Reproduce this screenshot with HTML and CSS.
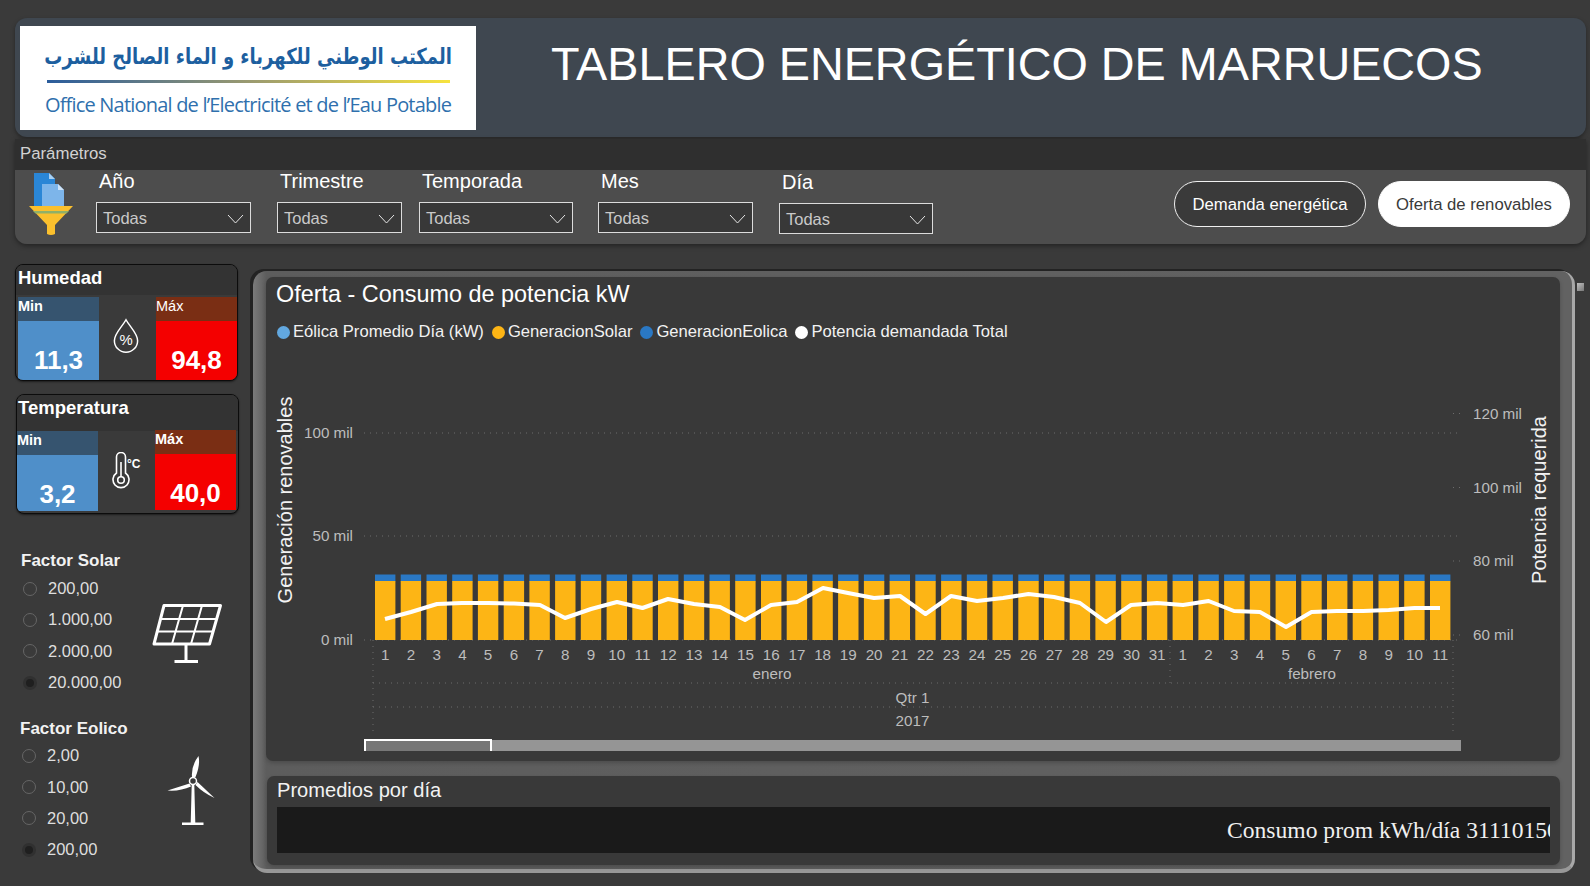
FILE: index.html
```html
<!DOCTYPE html>
<html lang="es">
<head>
<meta charset="utf-8">
<title>Tablero energético de Marruecos</title>
<link rel="stylesheet" href="styles.css">
</head>
<body>
<div class="page">
  <header class="header">
    <div class="logo">
      <div class="logo-ar" dir="rtl" lang="ar">المكتب الوطني للكهرباء و الماء الصالح للشرب</div>
      <div class="logo-rule"></div>
      <div class="logo-fr">Office National de l’Electricité et de l’Eau Potable</div>
    </div>
    <h1 class="title">TABLERO ENERGÉTICO DE MARRUECOS</h1>
  </header>

  <section class="params">
    <div class="params-head">Parámetros</div>
    <div class="params-body">
      <svg class="filter-icon" width="46" height="64" viewBox="28 172 46 64">
        <path d="M34 173h15l6 6v27H34z" fill="#2a86d6"/>
        <path d="M49 173l6 6h-6z" fill="#a9d0f2"/>
        <path d="M42 184h16l6 6v17H42z" fill="#7db5ea"/>
        <path d="M58 184l6 6h-6z" fill="#cfe3f7"/>
        <path d="M29 206h44l-18 19v9q-4 2-8 0v-9z" fill="#fbc02d"/>
        <path d="M33 211h36l-2.500 2.500H35.500z" fill="#8fb069"/>
      </svg>
      <div class="slicer w155 first">
        <label class="slicer-label">Año</label>
        <div class="select"><span>Todas</span><svg class="chev" width="17" height="10" viewBox="0 0 17 10"><path d="M1 1l7.500 8L16 1"/></svg></div>
      </div>
      <div class="slicer w125 gap26">
        <label class="slicer-label">Trimestre</label>
        <div class="select"><span>Todas</span><svg class="chev" width="17" height="10" viewBox="0 0 17 10"><path d="M1 1l7.500 8L16 1"/></svg></div>
      </div>
      <div class="slicer w154 gap17">
        <label class="slicer-label">Temporada</label>
        <div class="select"><span>Todas</span><svg class="chev" width="17" height="10" viewBox="0 0 17 10"><path d="M1 1l7.500 8L16 1"/></svg></div>
      </div>
      <div class="slicer w155 gap25">
        <label class="slicer-label">Mes</label>
        <div class="select"><span>Todas</span><svg class="chev" width="17" height="10" viewBox="0 0 17 10"><path d="M1 1l7.500 8L16 1"/></svg></div>
      </div>
      <div class="slicer w154 gap26 lower">
        <label class="slicer-label">Día</label>
        <div class="select"><span>Todas</span><svg class="chev" width="17" height="10" viewBox="0 0 17 10"><path d="M1 1l7.500 8L16 1"/></svg></div>
      </div>
      <div class="buttons">
        <button class="pill">Demanda energética</button>
        <button class="pill pill-on">Oferta de renovables</button>
      </div>
    </div>
  </section>

  <div class="content">
    <aside class="side">
      <div class="kpi">
        <div class="kpi-title">Humedad</div>
        <div class="kpi-row">
          <div class="stat stat-min"><div class="stat-head bold">Min</div><div class="stat-val">11,3</div></div>
          <svg class="kpi-icon" width="26" height="36" viewBox="0 0 28 38">
            <path class="ico" d="M14 1.500C10 9 1.500 16 1.500 24a12.500 12.500 0 0 0 25 0C26.500 16 18 9 14 1.500z"/>
            <text class="pct" x="14" y="29" text-anchor="middle">%</text>
          </svg>
          <div class="stat stat-max"><div class="stat-head">Máx</div><div class="stat-val">94,8</div></div>
        </div>
      </div>

      <div class="kpi kpi-temp">
        <div class="kpi-title">Temperatura</div>
        <div class="kpi-row">
          <div class="stat stat-min"><div class="stat-head bold">Min</div><div class="stat-val">3,2</div></div>
          <div class="thermo">
            <svg width="18" height="37" viewBox="0 0 18 37">
              <path class="ico" d="M4.500 21V5a4.500 4.500 0 0 1 9 0v16a8 8 0 1 1-9 0z"/>
              <circle class="ico" cx="9" cy="28" r="3.300"/><path class="ico" d="M9 10v15"/>
            </svg>
            <span class="deg">°C</span>
          </div>
          <div class="stat stat-max"><div class="stat-head bold">Máx</div><div class="stat-val">40,0</div></div>
        </div>
      </div>

      <div class="factor factor-solar">
        <div class="factor-list">
          <div class="factor-title">Factor Solar</div>
          <div class="radio"><i></i>200,00</div>
          <div class="radio"><i></i>1.000,00</div>
          <div class="radio"><i></i>2.000,00</div>
          <div class="radio on"><i></i>20.000,00</div>
        </div>
        <svg class="solar" width="72" height="62" viewBox="152 602 72 62">
          <path class="ico-w" d="M165 604.500h56.500L210.500 643H155z"/>
          <path class="ico-w2" d="M161 618h56M157.500 630.500h56M184 604.500L173 643M203 604.500L192 643"/>
          <path class="ico-w" d="M187 643v17M175.500 660.500h23.500"/>
        </svg>
      </div>

      <div class="factor factor-wind">
        <div class="factor-list">
          <div class="factor-title">Factor Eolico</div>
          <div class="radio"><i></i>2,00</div>
          <div class="radio"><i></i>10,00</div>
          <div class="radio"><i></i>20,00</div>
          <div class="radio on"><i></i>200,00</div>
        </div>
        <svg class="wind" width="52" height="72" viewBox="166 755 52 72">
          <path class="fill-w" d="M199.500 757q2 9-3 21l-3.500 0q-1-11 6.500-21zM168.500 791.500l22-7 1.500 3q-11 5-23.500 4zM215.500 799l-17-16-2 3q8 8 19 13z"/>
          <path class="fill-w" d="M192.700 786h2.600l1 38h-4.600zM183 823.500h21.500v2.500H183z"/>
          <circle class="hub" cx="194" cy="782" r="3.500"/>
        </svg>
      </div>
    </aside>

    <main class="main">
      <span class="corner"></span>
      <section class="chart-card">
        <h2 class="chart-title">Oferta - Consumo de potencia kW</h2>
        <div class="legend">
          <span class="lg"><i class="dot d1"></i>Eólica Promedio Día (kW)</span>
          <span class="lg"><i class="dot d2"></i>GeneracionSolar</span>
          <span class="lg"><i class="dot d3"></i>GeneracionEolica</span>
          <span class="lg"><i class="dot d4"></i>Potencia demandada Total</span>
        </div>
        <svg class="plot" width="1294" height="416" viewBox="266 345 1294 416">
          <g class="grid">
            <path d="M364 433H1457M364 536H1457M364 640H1457M373 683H1453M373 707H1453M373 640V733M1453 640V733M1170 640V683M1453 413.500H1463M1453 487.500H1463M1453 561H1463M1453 635H1463"/>
          </g>
          <g class="ticks">
            <text x="353" y="438" text-anchor="end">100 mil</text>
            <text x="353" y="541" text-anchor="end">50 mil</text>
            <text x="353" y="645" text-anchor="end">0 mil</text>
            <text x="1473" y="419">120 mil</text>
            <text x="1473" y="493">100 mil</text>
            <text x="1473" y="566">80 mil</text>
            <text x="1473" y="640">60 mil</text>
          </g>
          <text class="axis" transform="translate(292 500) rotate(-90)" text-anchor="middle">Generación renovables</text>
          <text class="axis" transform="translate(1546 500) rotate(-90)" text-anchor="middle">Potencia requerida</text>
          <g class="blue">
            <rect x="375" y="574.500" width="20.400" height="7"/><rect x="400.700" y="574.500" width="20.400" height="7"/><rect x="426.500" y="574.500" width="20.400" height="7"/><rect x="452.200" y="574.500" width="20.400" height="7"/><rect x="477.900" y="574.500" width="20.400" height="7"/><rect x="503.700" y="574.500" width="20.400" height="7"/><rect x="529.400" y="574.500" width="20.400" height="7"/><rect x="555.100" y="574.500" width="20.400" height="7"/><rect x="580.800" y="574.500" width="20.400" height="7"/><rect x="606.600" y="574.500" width="20.400" height="7"/><rect x="632.300" y="574.500" width="20.400" height="7"/><rect x="658" y="574.500" width="20.400" height="7"/><rect x="683.800" y="574.500" width="20.400" height="7"/><rect x="709.500" y="574.500" width="20.400" height="7"/><rect x="735.200" y="574.500" width="20.400" height="7"/><rect x="761" y="574.500" width="20.400" height="7"/><rect x="786.700" y="574.500" width="20.400" height="7"/><rect x="812.400" y="574.500" width="20.400" height="7"/><rect x="838.100" y="574.500" width="20.400" height="7"/><rect x="863.900" y="574.500" width="20.400" height="7"/><rect x="889.600" y="574.500" width="20.400" height="7"/><rect x="915.300" y="574.500" width="20.400" height="7"/><rect x="941.100" y="574.500" width="20.400" height="7"/><rect x="966.800" y="574.500" width="20.400" height="7"/><rect x="992.500" y="574.500" width="20.400" height="7"/><rect x="1018.300" y="574.500" width="20.400" height="7"/><rect x="1044" y="574.500" width="20.400" height="7"/><rect x="1069.700" y="574.500" width="20.400" height="7"/><rect x="1095.400" y="574.500" width="20.400" height="7"/><rect x="1121.200" y="574.500" width="20.400" height="7"/><rect x="1146.900" y="574.500" width="20.400" height="7"/><rect x="1172.600" y="574.500" width="20.400" height="7"/><rect x="1198.400" y="574.500" width="20.400" height="7"/><rect x="1224.100" y="574.500" width="20.400" height="7"/><rect x="1249.800" y="574.500" width="20.400" height="7"/><rect x="1275.600" y="574.500" width="20.400" height="7"/><rect x="1301.300" y="574.500" width="20.400" height="7"/><rect x="1327" y="574.500" width="20.400" height="7"/><rect x="1352.700" y="574.500" width="20.400" height="7"/><rect x="1378.500" y="574.500" width="20.400" height="7"/><rect x="1404.200" y="574.500" width="20.400" height="7"/><rect x="1430" y="574.500" width="20.400" height="7"/>
          </g>
          <g class="yellow">
            <rect x="375" y="581" width="20.400" height="59"/><rect x="400.700" y="581" width="20.400" height="59"/><rect x="426.500" y="581" width="20.400" height="59"/><rect x="452.200" y="581" width="20.400" height="59"/><rect x="477.900" y="581" width="20.400" height="59"/><rect x="503.700" y="581" width="20.400" height="59"/><rect x="529.400" y="581" width="20.400" height="59"/><rect x="555.100" y="581" width="20.400" height="59"/><rect x="580.800" y="581" width="20.400" height="59"/><rect x="606.600" y="581" width="20.400" height="59"/><rect x="632.300" y="581" width="20.400" height="59"/><rect x="658" y="581" width="20.400" height="59"/><rect x="683.800" y="581" width="20.400" height="59"/><rect x="709.500" y="581" width="20.400" height="59"/><rect x="735.200" y="581" width="20.400" height="59"/><rect x="761" y="581" width="20.400" height="59"/><rect x="786.700" y="581" width="20.400" height="59"/><rect x="812.400" y="581" width="20.400" height="59"/><rect x="838.100" y="581" width="20.400" height="59"/><rect x="863.900" y="581" width="20.400" height="59"/><rect x="889.600" y="581" width="20.400" height="59"/><rect x="915.300" y="581" width="20.400" height="59"/><rect x="941.100" y="581" width="20.400" height="59"/><rect x="966.800" y="581" width="20.400" height="59"/><rect x="992.500" y="581" width="20.400" height="59"/><rect x="1018.300" y="581" width="20.400" height="59"/><rect x="1044" y="581" width="20.400" height="59"/><rect x="1069.700" y="581" width="20.400" height="59"/><rect x="1095.400" y="581" width="20.400" height="59"/><rect x="1121.200" y="581" width="20.400" height="59"/><rect x="1146.900" y="581" width="20.400" height="59"/><rect x="1172.600" y="581" width="20.400" height="59"/><rect x="1198.400" y="581" width="20.400" height="59"/><rect x="1224.100" y="581" width="20.400" height="59"/><rect x="1249.800" y="581" width="20.400" height="59"/><rect x="1275.600" y="581" width="20.400" height="59"/><rect x="1301.300" y="581" width="20.400" height="59"/><rect x="1327" y="581" width="20.400" height="59"/><rect x="1352.700" y="581" width="20.400" height="59"/><rect x="1378.500" y="581" width="20.400" height="59"/><rect x="1404.200" y="581" width="20.400" height="59"/><rect x="1430" y="581" width="20.400" height="59"/>
          </g>
          <polyline class="line" points="385,619 411,612 437,604 462,603 488,603 514,603.500 540,605 565,618 591,609 617,602 642.500,608 668,599 694,604 720,607 745,620 771,605 797,602 823,588 848,593 874,598 900,596 925.500,614 951,596 977,601 1003,598 1028.500,594 1054,597 1080,603 1106,622 1131,605 1157,603 1183,605 1208.600,601 1234,611 1260,612 1286,627 1311.500,612 1337,611 1363,611 1388.700,610 1414.400,608 1440,608"/>
          <g class="ticks days" text-anchor="middle">
            <text x="385.200" y="660">1</text><text x="410.900" y="660">2</text><text x="436.700" y="660">3</text><text x="462.400" y="660">4</text><text x="488.100" y="660">5</text><text x="513.900" y="660">6</text><text x="539.600" y="660">7</text><text x="565.300" y="660">8</text><text x="591" y="660">9</text><text x="616.800" y="660">10</text><text x="642.500" y="660">11</text><text x="668.200" y="660">12</text><text x="694" y="660">13</text><text x="719.700" y="660">14</text><text x="745.400" y="660">15</text><text x="771.200" y="660">16</text><text x="796.900" y="660">17</text><text x="822.600" y="660">18</text><text x="848.300" y="660">19</text><text x="874.100" y="660">20</text><text x="899.800" y="660">21</text><text x="925.500" y="660">22</text><text x="951.300" y="660">23</text><text x="977" y="660">24</text><text x="1002.700" y="660">25</text><text x="1028.500" y="660">26</text><text x="1054.200" y="660">27</text><text x="1079.900" y="660">28</text><text x="1105.600" y="660">29</text><text x="1131.400" y="660">30</text><text x="1157.100" y="660">31</text><text x="1182.800" y="660">1</text><text x="1208.600" y="660">2</text><text x="1234.300" y="660">3</text><text x="1260" y="660">4</text><text x="1285.800" y="660">5</text><text x="1311.500" y="660">6</text><text x="1337.200" y="660">7</text><text x="1362.900" y="660">8</text><text x="1388.700" y="660">9</text><text x="1414.400" y="660">10</text><text x="1440.200" y="660">11</text>
            <text x="772" y="679">enero</text>
            <text x="1312" y="679">febrero</text>
            <text x="912.500" y="703">Qtr 1</text>
            <text x="912.500" y="726">2017</text>
          </g>
          <rect class="track" x="364" y="740" width="1097" height="11"/>
          <path class="thumb" d="M365 751V740H491V751"/>
        </svg>
      </section>
      <section class="avg-card">
        <h2 class="avg-title">Promedios por día</h2>
        <div class="ticker"><span>Consumo prom kWh/día 31110150</span></div>
      </section>
    </main>
  </div>
</div>
</body>
</html>
```

FILE: styles.css
```css
* { box-sizing: border-box; }
html, body { margin: 0; height: 100%; }
body {
  background: #3a3a3a;
  font-family: "Liberation Sans", Arial, sans-serif;
  color: #fff;
  overflow: hidden;
}
.page { height: 886px; padding: 18px 4px 0 15px; }

/* header */
.header {
  height: 119px;
  background: #3f4750;
  border-radius: 12px;
  padding: 8px 0 0 5px;
  display: flex;
  box-shadow: 0 2px 4px rgba(0,0,0,.35);
}
.logo {
  width: 456px;
  height: 104px;
  background: #fff;
  display: flex;
  flex-direction: column;
  align-items: center;
  flex: none;
}
.logo-ar {
  margin-top: 12px;
  height: 38px;
  line-height: 38px;
  font-family: "DejaVu Sans", sans-serif;
  font-size: 22px;
  font-weight: 700;
  color: #1d5f9f;
  white-space: nowrap;
  transform: scaleX(.818);
}
.logo-rule {
  margin-top: 4px;
  width: 403px;
  height: 3px;
  background: linear-gradient(90deg, #2a5c9c, #9a9a70 50%, #f7e33e);
}
.logo-fr {
  margin-top: 8px;
  font-family: "Open Sans", sans-serif;
  font-size: 20px;
  line-height: 28px;
  letter-spacing: -.8px;
  color: #2f70ad;
  white-space: nowrap;
}
.title {
  margin: 12px 0 0 75px;
  font-size: 46.750px;
  line-height: 52px;
  font-weight: 400;
  white-space: nowrap;
}

/* parameter bar */
.params {
  margin-top: 2px;
  border-radius: 0 0 12px 12px;
  box-shadow: 0 2px 5px rgba(0,0,0,.4);
}
.params-head {
  height: 31px;
  background: #2f2f2f;
  padding: 5px 0 0 5px;
  font-size: 16.800px;
  line-height: 19px;
  color: #d2d2d2;
}
.params-body {
  height: 74px;
  background: #4d4d4d;
  border-radius: 0 0 12px 12px;
  display: flex;
  position: relative;
  padding-left: 13px;
}
.filter-icon { flex: none; margin-top: 2px; }
.slicer { flex: none; }
.first { margin-left: 22px; }
.w155 { width: 155px; }
.w125 { width: 125px; }
.w154 { width: 154px; }
.gap26 { margin-left: 26px; }
.gap17 { margin-left: 17px; }
.gap25 { margin-left: 25px; }
.lower { margin-top: 1px; }
.slicer-label {
  display: block;
  height: 32px;
  padding: 0 0 0 3px;
  font-size: 20px;
  line-height: 22px;
  color: #fff;
}
.select {
  height: 31px;
  background: #383838;
  border: 1px solid #dcdcdc;
  display: flex;
  align-items: center;
  justify-content: space-between;
  padding: 1px 6px 0 6px;
  font-size: 16.500px;
  color: #c9c9c9;
}
.chev { margin-top: 2px; }
.chev path { fill: none; stroke: #e6e6e6; stroke-width: 1; }
.buttons {
  margin-left: auto;
  margin-right: 16px;
  margin-top: 11px;
  display: flex;
  gap: 12px;
  height: 46px;
}
.pill {
  width: 192px;
  height: 46px;
  border-radius: 23px;
  border: 1px solid #f0f0f0;
  background: #3a3a3a;
  color: #fff;
  font: 16.700px "Liberation Sans", Arial, sans-serif;
  padding: 2px 0 0;
}
.pill-on { background: #fff; color: #3a3a3a; border-color: #fff; }

/* layout */
.content {
  margin-top: 20px;
  display: grid;
  grid-template-columns: 225px 1322px;
  column-gap: 13px;
  align-items: start;
}

/* KPI cards */
.kpi {
  width: 223px;
  height: 117px;
  background: #3a3a3a;
  border: 1px solid #0c0c0c;
  border-radius: 8px;
  box-shadow: 0 1px 2px rgba(0,0,0,.5);
  overflow: hidden;
  display: flex;
  flex-direction: column;
}
.kpi-temp { height: 120px; margin: 13px 0 0 1px; }
.kpi-title {
  height: 30px;
  background: #333;
  padding: 2px 0 0 2px;
  font-size: 18.500px;
  line-height: 22px;
  font-weight: 700;
}
.kpi-temp .kpi-title { height: 36px; padding-top: 2px; padding-left: 1px; }
.kpi-row {
  flex: 1;
  display: flex;
  justify-content: space-between;
  align-items: flex-start;
  padding: 2px 0 0 2px;
}
.kpi-temp .kpi-row { padding: 0 2px 0 0; }
.kpi-temp .stat-max { margin-top: -1px; }
.stat { width: 81px; display: flex; flex-direction: column; }
.stat-head {
  height: 24px;
  padding-left: 0;
  font-size: 14.500px;
  line-height: 19px;
}
.stat-min .stat-head { background: #36546f; }
.stat-max .stat-head { background: #7a2e14; }
.bold { font-weight: 700; }
.stat-val {
  height: 59px;
  font-size: 26px;
  font-weight: 700;
  text-align: center;
  line-height: 30px;
  padding-top: 24px;
}
.stat-min .stat-val { background: #4f8fc9; }
.stat-max .stat-val { background: #f40000; }
.kpi-temp .stat-val { height: 56px; padding-top: 24px; }
.kpi-icon { margin: 21px 3px 0 0; flex: none; }
.pct { font-size: 16px; fill: #fff; }
.thermo { margin: 21px 0 0 3px; display: flex; width: 32px; }
.deg { font-size: 12px; line-height: 12px; margin-top: 6px; margin-left: -3px; font-weight: 700; }
.ico { fill: none; stroke: #fff; stroke-width: 1.600; }
.ico-w { fill: none; stroke: #fff; stroke-width: 3; stroke-linejoin: round; }
.ico-w2 { fill: none; stroke: #fff; stroke-width: 2; }
.fill-w { fill: #fff; }
.hub { fill: #3a3a3a; stroke: #fff; stroke-width: 1.500; }

/* factor groups */
.factor { display: flex; justify-content: space-between; align-items: flex-start; }
.factor-solar { margin-top: 37px; padding: 0 17px 0 6px; }
.factor-wind { margin-top: 21px; padding: 0 20px 0 5px; }
.factor-title {
  font-size: 17px;
  line-height: 20px;
  font-weight: 700;
  color: #f2f2f2;
  margin-bottom: 2px;
}
.factor-wind .factor-title { margin-bottom: 1px; }
.radio {
  height: 31.300px;
  display: flex;
  align-items: center;
  font-size: 16.500px;
  color: #dedede;
}
.radio i {
  width: 14px;
  height: 14px;
  border-radius: 50%;
  border: 1px solid #666;
  margin: 0 11px 0 2px;
  flex: none;
}
.radio.on i {
  background: #1f1f1f;
  border: 3px solid #303030;
}
.solar { margin-top: 52px; }
.wind { margin-top: 35px; margin-right: 3px; }

/* main panel */
.main {
  position: relative;
  height: 602px;
  margin-top: 7px;
  background: linear-gradient(90deg, #7b7b7b, #5d5d5d 1%, #626262 99%);
  border-right: 3px solid #a8a8a8;
  border-bottom: 4px solid #989898;
  border-radius: 14px;
  box-shadow: -3px -2px 0 #232323;
  padding: 6px 12px 0 13px;
}
.corner {
  position: absolute;
  right: -12px;
  top: 12px;
  width: 7px;
  height: 8px;
  background: linear-gradient(135deg, #c0c0c0, #777);
}
.chart-card {
  height: 484px;
  background: #393939;
  border-radius: 7px;
  padding: 0 0 0 10px;
  position: relative;
  box-shadow: 0 2px 4px rgba(0,0,0,.2);
}
.chart-title {
  margin: 0;
  padding-top: 3px;
  font-size: 23.400px;
  line-height: 28px;
  font-weight: 400;
}
.legend {
  display: flex;
  gap: 8px;
  margin-top: 14px;
  padding-left: 1px;
  font-size: 16.600px;
  line-height: 20px;
}
.lg { display: flex; align-items: center; color: #f2f2f2; }
.dot { width: 13px; height: 13px; border-radius: 50%; margin-right: 3px; }
.d1 { background: #62a8e0; }
.d2 { background: #fdb515; }
.d3 { background: #2a78c4; }
.d4 { background: #fff; }
.plot { position: absolute; left: 0; top: 68px; }
.grid path { fill: none; stroke: #6c6c6c; stroke-width: 1; stroke-dasharray: 1 5; }
.ticks text { font-size: 15.200px; fill: #bdbdbd; }
.axis { font-size: 20px; fill: #f2f2f2; }
.blue rect { fill: #2a78c4; }
.yellow rect { fill: #fdb515; }
.line { fill: none; stroke: #fff; stroke-width: 4; stroke-linejoin: round; }
.track { fill: #959595; }
.thumb { fill: #777; stroke: #fff; stroke-width: 2; }

.avg-card {
  margin: 15px 0 0 1px;
  height: 89px;
  background: #393939;
  border-radius: 7px;
  padding: 0 10px 0 10px;
  box-shadow: 0 2px 4px rgba(0,0,0,.2);
}
.avg-title {
  margin: 0;
  padding-top: 2px;
  height: 31px;
  font-size: 20.100px;
  line-height: 25px;
  font-weight: 400;
  color: #f2f2f2;
}
.ticker {
  height: 46px;
  background: #1a1a1a;
  overflow: hidden;
  white-space: nowrap;
  padding: 8px 0 0 950px;
  font-family: "Liberation Serif", "Times New Roman", serif;
  font-size: 23.600px;
  line-height: 30px;
  color: #f0f0f0;
}
```
